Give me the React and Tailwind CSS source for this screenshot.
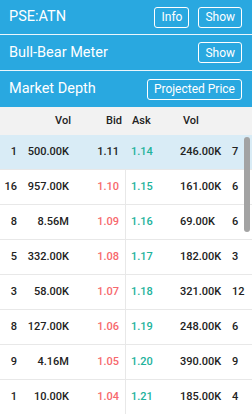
import React from "react";

const rows = [
  ["1", "500.00K", "1.11", "1.14", "246.00K", "7"],
  ["16", "957.00K", "1.10", "1.15", "161.00K", "6"],
  ["8", "8.56M", "1.09", "1.16", "69.00K", "6"],
  ["5", "332.00K", "1.08", "1.17", "182.00K", "3"],
  ["3", "58.00K", "1.07", "1.18", "321.00K", "12"],
  ["8", "127.00K", "1.06", "1.19", "248.00K", "6"],
  ["9", "4.16M", "1.05", "1.20", "390.00K", "9"],
  ["1", "10.00K", "1.04", "1.21", "185.00K", "4"],
];

const Btn = ({ children }) => (
  <button className="h-[21px] px-[6px] border border-white rounded-[3px] text-white text-[12px] leading-none">
    {children}
  </button>
);

export default function App() {
  return (
    <div className="relative w-[252px] h-[414px] overflow-hidden bg-white font-['Roboto',sans-serif]">
      <div className="bg-[#29a8e0] text-white">
        <div className="h-[35px] flex items-center justify-between pl-[9px] pr-[10px] border-b border-white/90">
          <span className="text-[14.5px]">PSE:ATN</span>
          <div className="flex gap-[9px]">
            <Btn>Info</Btn>
            <Btn>Show</Btn>
          </div>
        </div>
        <div className="h-[36px] flex items-center justify-between pl-[9px] pr-[10px] border-b border-white/90">
          <span className="text-[14.5px]">Bull-Bear Meter</span>
          <Btn>Show</Btn>
        </div>
        <div className="h-[36px] flex items-center justify-between pl-[9px] pr-[10px]">
          <span className="text-[14.5px]">Market Depth</span>
          <Btn>Projected Price</Btn>
        </div>
      </div>

      <div className="h-[28px] bg-[#f2f2f2] flex items-center text-[11px] font-medium text-[#222]">
        <div className="w-[18px]" />
        <div className="w-[54px] text-right pr-[1px]">Vol</div>
        <div className="w-[51px] text-right pr-[1px]">Bid</div>
        <div className="w-[57px] pl-[9px]">Ask</div>
        <div className="flex-1 pl-[3px]">Vol</div>
      </div>

      {rows.map((r, i) => (
        <div
          key={i}
          className={`h-[35px] flex items-stretch text-[11px] font-medium text-[#222] border-b border-[#e8e8e8] ${i === 0 ? "bg-[#d9ecf6]" : ""}`}
        >
          <div className="w-[18px] flex items-center justify-end pr-[1px]">{r[0]}</div>
          <div className="w-[52px] flex items-center justify-end pr-[1px]">{r[1]}</div>
          <div className={`w-[55px] flex items-center justify-end pr-[6px] ${i === 0 ? "" : "text-[#f7686c]"}`}>{r[2]}</div>
          <div className={`w-[55px] flex items-center pl-[5px] text-[#22b29b] ${i === 0 ? "" : "border-l border-[#e8e8e8]"}`}>
            <span className={i === 0 ? "pl-[1px]" : ""}>{r[3]}</span>
          </div>
          <div className="w-[52px] flex items-center">{r[4]}</div>
          <div className="flex-1 flex items-center">{r[5]}</div>
        </div>
      ))}

      <div className="absolute left-[244px] top-[137px] w-[6px] h-[95px] rounded-[3px] bg-[#a3a3a3]" />
    </div>
  );
}
